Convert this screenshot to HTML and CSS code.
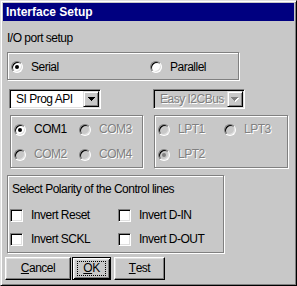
FILE: index.html
```html
<!DOCTYPE html>
<html>
<head>
<meta charset="utf-8">
<title>Interface Setup</title>
<link rel="stylesheet" href="styles.css">
</head>
<body>
<div class="window">
  <div class="titlebar">Interface Setup</div>
  <div class="content">
    <div class="caption">I/O port setup</div>

    <div class="group port-type">
      <div class="opt opt-serial"><span class="radio checked"></span><span class="lbl">Serial</span></div>
      <div class="opt"><span class="radio"></span><span class="lbl">Parallel</span></div>
    </div>

    <div class="selects">
      <div class="combo">
        <span class="combo-text">SI Prog API</span>
        <span class="combo-btn"><svg class="arrow" width="7" height="5" viewBox="0 0 7 5"><path class="arr-main" d="M0 0h7v1H0zM1 1h5v1H1zM2 2h3v1H2zM3 3h1v1H3z"/></svg></span>
      </div>
      <div class="combo disabled">
        <span class="combo-text">Easy I2CBus</span>
        <span class="combo-btn"><svg class="arrow" width="8" height="5" viewBox="0 0 8 5"><path class="arr-shadow" d="M1 1h7v1H1zM2 2h5v1H2zM3 3h3v1H3zM4 4h1v1H4z"/><path class="arr-main" d="M0 0h7v1H0zM1 1h5v1H1zM2 2h3v1H2zM3 3h1v1H3z"/></svg></span>
      </div>
    </div>

    <div class="ports">
      <div class="group port-list com">
        <div class="opt"><span class="radio checked"></span><span class="lbl">COM1</span></div>
        <div class="opt disabled"><span class="radio"></span><span class="lbl">COM3</span></div>
        <div class="opt disabled"><span class="radio"></span><span class="lbl">COM2</span></div>
        <div class="opt disabled"><span class="radio"></span><span class="lbl">COM4</span></div>
      </div>
      <div class="group port-list lpt">
        <div class="opt disabled"><span class="radio"></span><span class="lbl">LPT1</span></div>
        <div class="opt disabled"><span class="radio"></span><span class="lbl">LPT3</span></div>
        <div class="opt disabled"><span class="radio checked"></span><span class="lbl">LPT2</span></div>
      </div>
    </div>

    <div class="group polarity">
      <div class="group-title">Select Polarity of the Control lines</div>
      <div class="checks">
        <div class="opt"><span class="check"></span><span class="lbl">Invert Reset</span></div>
        <div class="opt"><span class="check"></span><span class="lbl">Invert D-IN</span></div>
        <div class="opt"><span class="check"></span><span class="lbl">Invert SCKL</span></div>
        <div class="opt"><span class="check"></span><span class="lbl">Invert D-OUT</span></div>
      </div>
    </div>

    <div class="buttons">
      <button class="btn btn-cancel"><u>C</u>ancel</button>
      <button class="btn btn-ok"><u>O</u>K</button>
      <button class="btn btn-test"><u>T</u>est</button>
    </div>
  </div>
</div>
</body>
</html>
```
FILE: styles.css
```css
* {
  box-sizing: border-box;
}

html,
body {
  margin: 0;
  padding: 0;
}

body {
  width: 297px;
  height: 286px;
  overflow: hidden;
  background: #c8c8c8;
  color: #000;
  font-family: "Liberation Sans", Arial, sans-serif;
  font-size: 12px;
  letter-spacing: -0.5px;
  line-height: 15px;
}

.window {
  width: 297px;
  height: 286px;
  display: flex;
  flex-direction: column;
  background: #c8c8c8;
  border: 1px solid;
  border-color: #dfdfdf #000 #000 #dfdfdf;
  box-shadow: inset 1px 1px #fff, inset -1px -1px #808080;
  padding: 2px;
}

.titlebar {
  height: 18px;
  flex: none;
  background: #000080;
  color: #fff;
  font-weight: bold;
  font-size: 12px;
  letter-spacing: 0;
  line-height: 17px;
  padding: 1px 0 0 3px;
  white-space: nowrap;
}

.content {
  display: flex;
  flex-direction: column;
  align-items: flex-start;
}

.caption {
  margin: 10px 0 0 4px;
}

/* etched group frame */
.group {
  border: 1px solid #808080;
  box-shadow: inset 1px 1px #fff, 1px 1px #fff;
}

.opt {
  display: flex;
  align-items: center;
  white-space: nowrap;
}

.lbl {
  margin-left: 8px;
}

.disabled .lbl,
.combo.disabled .combo-text {
  color: #808080;
  text-shadow: 1px 1px 0 #fff;
}

/* radio buttons */
.radio {
  position: relative;
  flex: none;
  width: 12px;
  height: 12px;
  border-radius: 50%;
  border: 1px solid;
  border-color: #808080 #fff #fff #808080;
  box-shadow: inset 1px 1px #000, inset -1px -1px #dfdfdf;
  background: #fff;
}

.radio.checked::after {
  content: "";
  position: absolute;
  left: 3px;
  top: 3px;
  width: 4px;
  height: 4px;
  border-radius: 50%;
  background: #000;
}

.disabled .radio {
  background: #c8c8c8;
}

.disabled .radio.checked::after {
  background: #808080;
}

/* checkboxes */
.check {
  flex: none;
  width: 13px;
  height: 13px;
  border: 1px solid;
  border-color: #808080 #fff #fff #808080;
  box-shadow: inset 1px 1px #000, inset -1px -1px #dfdfdf;
  background: #fff;
}

/* serial / parallel */
.port-type {
  margin: 6px 0 0 4px;
  width: 232px;
  height: 28px;
  display: flex;
  align-items: center;
  padding: 2px 0 0 3px;
}

.opt-serial {
  width: 139px;
}

/* combo boxes */
.selects {
  display: flex;
  gap: 52px;
  margin: 9px 0 0 6px;
}

.combo {
  width: 92px;
  height: 20px;
  display: flex;
  padding: 1px;
  background: #fff;
  border: 1px solid;
  border-color: #808080 #fff #fff #808080;
  box-shadow: inset 1px 1px #000, inset -1px -1px #dfdfdf;
}

.combo.disabled {
  background: #c8c8c8;
}

.combo-text {
  flex: 1;
  padding-left: 5px;
  line-height: 16px;
  white-space: nowrap;
  overflow: hidden;
}

.combo-btn {
  flex: none;
  width: 16px;
  height: 16px;
  display: flex;
  align-items: center;
  justify-content: center;
  background: #c8c8c8;
  border: 1px solid;
  border-color: #dfdfdf #000 #000 #dfdfdf;
  box-shadow: inset 1px 1px #fff, inset -1px -1px #808080;
}

.arrow {
  display: block;
  shape-rendering: crispEdges;
}

.arr-main {
  fill: #000;
}

.combo.disabled .arr-main {
  fill: #808080;
}

.arr-shadow {
  fill: #fff;
}

/* COM / LPT groups */
.ports {
  display: flex;
  gap: 11px;
  margin: 6px 0 0 7px;
}

.port-list {
  height: 53px;
  display: grid;
  grid-auto-rows: 25px;
  padding: 1px 0 0 3px;
}

.com {
  width: 133px;
  grid-template-columns: 65px 1fr;
}

.lpt {
  width: 134px;
  grid-template-columns: 66px 1fr;
}

/* polarity */
.polarity {
  margin: 7px 0 0 4px;
  width: 217px;
  height: 78px;
  padding: 6px 0 1px 2px;
}

.group-title {
  margin-left: 2px;
  white-space: nowrap;
}

.checks {
  margin-top: 6px;
  display: grid;
  grid-template-columns: 108px 1fr;
  grid-auto-rows: 24px;
}

/* push buttons */
.buttons {
  display: flex;
  margin: 4px 0 0 2px;
}

.btn {
  position: relative;
  height: 23px;
  padding: 0;
  font: inherit;
  letter-spacing: inherit;
  color: #000;
  background: #c8c8c8;
  border: 1px solid;
  border-color: #fff #000 #000 #fff;
  box-shadow: inset -1px -1px #808080, inset 1px 1px #dfdfdf;
  display: flex;
  align-items: center;
  justify-content: center;
}

.btn-cancel {
  width: 66px;
}

.btn-ok {
  width: 39px;
  margin-left: 1px;
  border-color: #000;
  box-shadow: inset 1px 1px #fff, inset -1px -1px #000, inset 2px 2px #dfdfdf, inset -2px -2px #808080;
}

.btn-ok::after {
  content: "";
  position: absolute;
  left: 4px;
  right: 4px;
  top: 3px;
  bottom: 3px;
  border: 1px dotted #000;
}

.btn-test {
  width: 51px;
  margin-left: 3px;
}
```
